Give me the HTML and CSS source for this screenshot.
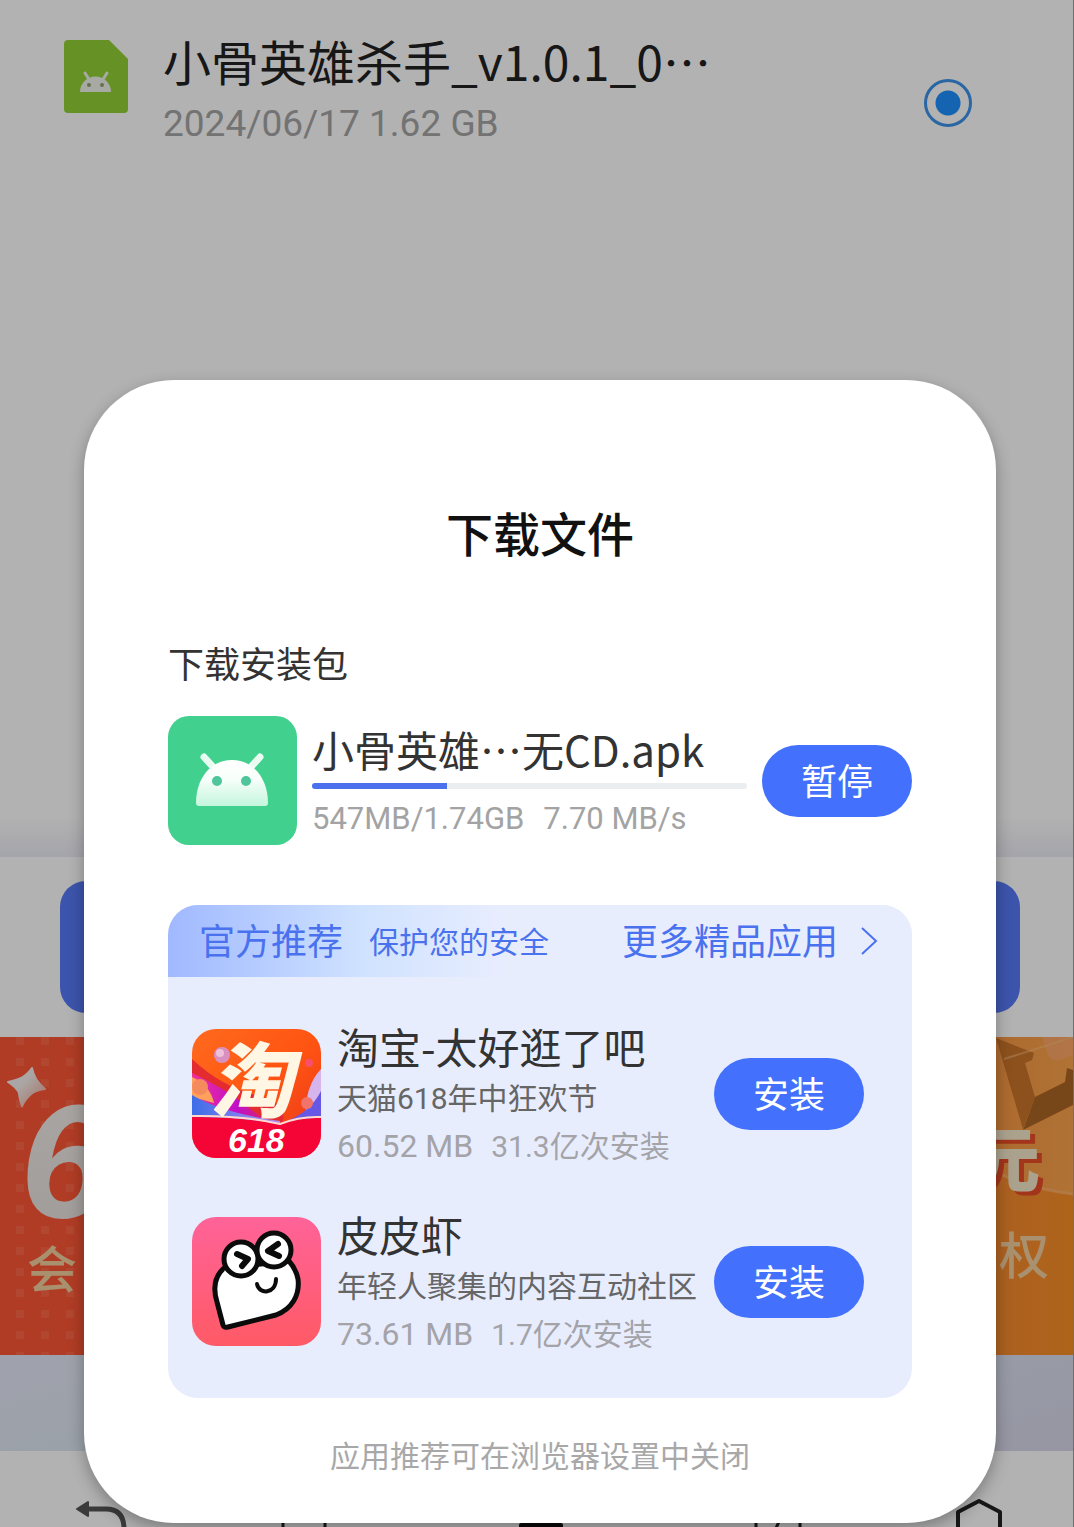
FILE: index.html
```html
<!DOCTYPE html>
<html lang="zh-CN">
<head>
<meta charset="utf-8">
<meta name="viewport" content="width=device-width, initial-scale=1">
<title>下载文件</title>
<link rel="stylesheet" href="styles.css">
</head>
<body>
<div class="page">
  <main class="files">
    <label class="file">
      <svg class="file-icon" viewBox="0 0 64 73" aria-hidden="true">
        <path d="M4 0H45L64 19V69a4 4 0 0 1-4 4H4a4 4 0 0 1-4-4V4a4 4 0 0 1 4-4z" fill="#93d235"/>
        <path d="M16 52a15 15 0 0 1 31 0z" fill="#f0f2ea"/>
        <path d="M21 33l5 8M43 33l-5 8" stroke="#f0f2ea" stroke-width="3" stroke-linecap="round"/>
        <circle cx="25" cy="45" r="2" fill="#93a070"/><circle cx="38" cy="45" r="2" fill="#93a070"/>
      </svg>
      <span class="file-text">
        <span class="file-name">小骨英雄杀手_v1.0.1_0…</span>
        <span class="file-meta">2024/06/17 1.62 GB</span>
      </span>
      <input class="file-radio" type="radio" name="file" checked>
    </label>
  </main>
  <div class="action-bar"><button class="action" type="button" aria-label="下载"></button></div>
  <div class="banner">
    <svg class="banner-art" width="200" height="318" viewBox="0 0 200 318">
      <defs>
        <pattern id="grid" x="16" y="0" width="25" height="21" patternUnits="userSpaceOnUse"><rect width="8" height="8" fill="#ff8468" opacity=".35"/></pattern>
        <linearGradient id="star" x1="0" y1="0" x2="1" y2="1"><stop offset=".4" stop-color="#f4eeec"/><stop offset="1" stop-color="#f2a08c"/></linearGradient>
        <linearGradient id="six" x1="0" y1="0" x2="0" y2="1"><stop offset="0" stop-color="#f2efec"/><stop offset="1" stop-color="#e6dfdc"/></linearGradient>
      </defs>
      <rect x="12" width="188" height="318" fill="url(#grid)"/>
      <path d="M32 31q2 12 13 21q-10 1-15 6q-6 6-8 11q-3-9-3-13q-3-6-11-11q9-2 13-4q7-4 11-10z" fill="url(#star)" stroke="url(#star)" stroke-width="2" stroke-linejoin="round"/>
      <text class="art-six" x="20" y="180" fill="url(#six)">6</text>
      <text class="art-word" x="27" y="251">会</text>
    </svg>
    <svg class="banner-art" width="174" height="318" viewBox="0 0 174 318">
      <defs><linearGradient id="shine" x1="0" y1="0" x2="1" y2="0"><stop offset="0" stop-color="#f08c38"/><stop offset="1" stop-color="#ffb66c"/></linearGradient></defs>
      <path d="M0 0H174V158Q130 152 90 132L0 90z" fill="url(#shine)" opacity=".55"/>
      <path d="M90 132Q130 152 174 157" fill="none" stroke="#ffb870" stroke-width="3" opacity=".6"/>
      <path d="M97 1l38 15l-2 7l-7 3l10 34l-12 32z" fill="#c9742a"/>
      <path d="M136 60l30-15l2-14l6 2v35l-50 25z" fill="#ad6624"/>
      <path d="M143 0l6 18q4 7 12 5l13-5V0z" fill="#ffab7c" opacity=".55"/>
      <path d="M105 22l38-12l31-10" stroke="#ffc080" stroke-width="2" opacity=".5"/>
      <text class="art-yuan" x="71" y="149">元</text>
      <text class="art-word" x="100" y="237">权</text>
    </svg>
  </div>
  <div class="strip"></div>
  <nav class="toolbar">
    <button class="tool" type="button" aria-label="返回"><svg viewBox="0 0 52 52"><path d="M10 10H30Q48 10 48 30" fill="none" stroke="#555" stroke-width="5"/><path d="M1 10L12 3V17z" fill="#555" stroke="#555" stroke-width="2" stroke-linejoin="round"/></svg></button>
    <span class="tool-group">
      <button class="tool" type="button" aria-label="目录"><svg viewBox="0 0 52 52"><path d="M5 12V50M47 12V50" stroke="#222" stroke-width="3"/></svg></button>
      <button class="tool" type="button" aria-label="菜单"><svg viewBox="0 0 52 52"><rect x="4" y="24" width="44" height="6" rx="2" fill="#111"/></svg></button>
      <button class="tool" type="button" aria-label="窗口"><svg viewBox="0 0 52 52"><path d="M4 16V50M48 16V50M30 16L20 38" stroke="#222" stroke-width="3"/></svg></button>
    </span>
    <button class="tool" type="button" aria-label="主页"><svg viewBox="0 0 52 52"><path d="M5 50V13L26 2L47 13V50" fill="none" stroke="#222" stroke-width="4" stroke-linejoin="round"/></svg></button>
  </nav>
</div>

<div class="overlay">
  <section class="dialog" role="dialog" aria-labelledby="dialog-title">
    <h1 class="dialog-title" id="dialog-title">下载文件</h1>
    <h2 class="label">下载安装包</h2>
    <div class="download">
      <svg class="icon" viewBox="0 0 129 129" aria-hidden="true">
        <defs><linearGradient id="droid" x1="0" y1="0" x2="0" y2="1"><stop offset="0" stop-color="#fff"/><stop offset=".4" stop-color="#f8fffb"/><stop offset="1" stop-color="#c4f6dd"/></linearGradient></defs>
        <rect width="129" height="129" rx="21" fill="#41d08d"/>
        <path d="M36 41l10 11M92 41l-10 11" stroke="#e8fcf2" stroke-width="7" stroke-linecap="round"/>
        <path d="M28 87C28 62 43 44 64 44s36 18 36 43q0 3-3 3H31q-3 0-3-3z" fill="url(#droid)"/>
        <circle cx="49" cy="65" r="5" fill="#4fc59b"/><circle cx="78" cy="65" r="5" fill="#4fc59b"/>
      </svg>
      <div class="download-text">
        <div class="name">小骨英雄…无CD.apk</div>
        <div class="track"><div class="fill" style="width:31%"></div></div>
        <div class="speed"><span>547MB/1.74GB</span><span>7.70 MB/s</span></div>
      </div>
      <button class="pill" type="button">暂停</button>
    </div>

    <section class="panel">
      <header class="panel-head">
        <h2 class="panel-title">官方推荐</h2>
        <span class="panel-note">保护您的安全</span>
        <a class="more" href="#apps">更多精品应用
          <svg class="chevron" viewBox="0 0 18 30" aria-hidden="true"><path d="M2 2L16 15L2 28" fill="none" stroke="#4a72ee" stroke-width="2"/></svg>
        </a>
      </header>
      <ul class="apps" id="apps">
        <li class="app">
          <svg class="icon" viewBox="0 0 129 129" aria-hidden="true">
            <defs>
              <clipPath id="round"><rect width="129" height="129" rx="24"/></clipPath>
              <linearGradient id="tb" x1="0" y1="0" x2="1" y2="1"><stop offset="0" stop-color="#ff6a1e"/><stop offset=".5" stop-color="#ff5512"/><stop offset="1" stop-color="#e8341c"/></linearGradient>
              <linearGradient id="violet" x1="0" y1="0" x2="1" y2="0"><stop offset="0" stop-color="#f0309a"/><stop offset=".5" stop-color="#c010c8"/><stop offset="1" stop-color="#e8302c"/></linearGradient>
              <linearGradient id="blue" x1="0" y1="0" x2="1" y2="0"><stop offset="0" stop-color="#3c6ee8"/><stop offset="1" stop-color="#b48cf0"/></linearGradient>
            </defs>
            <g clip-path="url(#round)">
              <rect width="129" height="129" fill="url(#tb)"/>
              <path d="M0 30Q30 58 64 66T90 96L0 90z" fill="#e42c30"/>
              <path d="M0 44Q34 60 56 78T92 96L0 92z" fill="url(#violet)"/>
              <path d="M0 48q18 8 22 26L0 68z" fill="#ffa05c"/>
              <path d="M0 66Q30 84 88 92V98H0z" fill="url(#blue)"/>
              <path d="M129 40Q112 58 114 90H129z" fill="#d6b4ec"/>
              <path d="M129 62Q118 84 92 93L129 90z" fill="#6658e4"/>
              <circle cx="30" cy="26" r="8" fill="#d890c0"/><circle cx="28" cy="24" r="4" fill="#efc0dc"/>
              <circle cx="8" cy="58" r="8" fill="#f58a5c"/><circle cx="115" cy="74" r="6" fill="#f0746c"/>
              <circle cx="117" cy="34" r="4" fill="#f8506c"/>
              <path d="M0 88Q50 88 88 95Q108 88 129 89V129H0z" fill="#f50536"/>
              <path d="M0 87Q50 86 88 95Q108 87 129 88" fill="none" stroke="#ffd8d0" stroke-width="2"/>
              <text class="tao" x="18" y="82">淘</text>
              <text class="tao-sale" x="36" y="123">618</text>
            </g>
          </svg>
          <div class="app-text">
            <h3 class="name">淘宝-太好逛了吧</h3>
            <p class="desc">天猫618年中狂欢节</p>
            <p class="meta"><span class="size">60.52 MB</span><span>31.3亿次安装</span></p>
          </div>
          <button class="pill" type="button">安装</button>
        </li>
        <li class="app">
          <svg class="icon" viewBox="0 0 129 129" aria-hidden="true">
            <defs><linearGradient id="pink" x1="0" y1="0" x2="0" y2="1"><stop offset="0" stop-color="#ff6398"/><stop offset="1" stop-color="#ff5a66"/></linearGradient></defs>
            <rect width="129" height="129" rx="24" fill="url(#pink)"/>
            <g fill="#fff" stroke="#0b0b0b" stroke-width="5" stroke-linejoin="round" stroke-linecap="round">
              <path d="M32 51C22 60 21 72 25 85L31 108Q32 111 36 110L84 98C100 92 108 78 106 62Q104 52 97 44z"/>
              <circle cx="49" cy="42" r="17"/><circle cx="82" cy="33" r="17"/>
              <path d="M45 37L56 42L50 49M86 27L76 34L87 39" fill="none" stroke-width="6"/>
              <path d="M65 67C67 78 84 77 84 62" fill="none" stroke-width="4"/>
            </g>
          </svg>
          <div class="app-text">
            <h3 class="name">皮皮虾</h3>
            <p class="desc">年轻人聚集的内容互动社区</p>
            <p class="meta"><span class="size">73.61 MB</span><span>1.7亿次安装</span></p>
          </div>
          <button class="pill" type="button">安装</button>
        </li>
      </ul>
    </section>
    <p class="hint">应用推荐可在浏览器设置中关闭</p>
  </section>
</div>
</body>
</html>
```
FILE: styles.css
```css
* { box-sizing: border-box; }
body, h1, h2, h3, p, ul { margin: 0; padding: 0; }
h1, h2, h3 { font-weight: 400; }
body {
  position: relative;
  font-family: Roboto, "Noto Sans CJK SC", sans-serif;
  color: #222;
  background: #fff;
}
button, input { margin: 0; padding: 0; border: 0; font: inherit; }
svg { display: block; flex: none; }

/* Page under the dialog */
.page {
  display: flex;
  flex-direction: column;
  min-height: 100vh;
  border-right: 1px solid #a0a0a0;
}
.files {
  flex: 1;
  padding: 28px 101px 0 64px;
  background: linear-gradient(to top, #ebebf5, #fff 40px);
}
.file { display: flex; align-items: flex-start; }
.file-icon { width: 64px; height: 73px; margin: 12px 35px 0 0; }
.file-text { display: flex; flex: 1; flex-direction: column; gap: 10px; min-width: 0; }
.file-name { font-family: "Noto Sans CJK SC", sans-serif; font-size: 48px; line-height: 64px; white-space: nowrap; }
.file-meta { font-size: 37px; line-height: 44px; color: #a5a5a5; }
.file-radio {
  appearance: none;
  width: 48px;
  height: 48px;
  margin-top: 51px;
  border: 3px solid #3b93ea;
  border-radius: 50%;
  background: radial-gradient(circle, #1d90ff 12px, transparent 13px);
}
.action-bar { padding: 24px 53px 24px 60px; }
.action { display: block; width: 100%; height: 132px; border-radius: 26px; background: #5679f6; }
.banner {
  display: flex;
  justify-content: space-between;
  height: 318px;
  overflow: hidden;
  background: linear-gradient(to right, #fe5635 20%, #f58832 90%, #fb9028);
}
.art-six { font: italic 700 162px "Liberation Sans", sans-serif; }
.art-word { font: 500 50px "Noto Sans CJK SC", sans-serif; fill: #f2cf9e; }
.art-yuan {
  font: 900 70px "Noto Sans CJK SC", sans-serif;
  fill: #f5e8cc;
  filter: drop-shadow(5px 4px 0 #e84c26);
}
.strip { height: 96px; background: linear-gradient(165deg, #e4e8f6, #dbe6f1 50%, #d8d6ea); }
.toolbar {
  display: flex;
  justify-content: space-between;
  height: 76px;
  padding: 48px 68px 0 76px;
  overflow: hidden;
}
.tool-group { display: flex; justify-content: space-between; flex-basis: 526px; }
.tool { width: 52px; height: 52px; background: none; }

/* Dialog */
.overlay {
  position: absolute;
  inset: 0;
  display: flex;
  align-items: flex-end;
  padding: 0 78px 4px 84px;
  background: rgba(0, 0, 0, .3);
}
.dialog {
  flex: 1;
  min-width: 0;
  padding: 124px 84px 46px;
  border-radius: 90px;
  background: #fff;
  box-shadow: 0 6px 16px rgba(0, 0, 0, .3);
}
.dialog-title { font-size: 47px; line-height: 64px; font-weight: 500; text-align: center; color: #111; }
.label { margin-top: 74px; font-size: 36px; line-height: 48px; color: #333; }
.download { display: flex; align-items: center; gap: 15px; margin-top: 26px; }
.icon { width: 129px; height: 129px; }
.download-text { flex: 1; min-width: 0; }
.name { font-family: "Noto Sans CJK SC", sans-serif; font-size: 42px; line-height: 56px; color: #333; white-space: nowrap; }
.track { height: 6px; margin: 6px 0 8px; border-radius: 3px; background: #ebeef0; overflow: hidden; }
.fill { height: 100%; background: #4a70ee; }
.speed { display: flex; gap: 19px; font-size: 31px; line-height: 44px; color: #a3a3a3; white-space: nowrap; }
.pill {
  flex: none;
  width: 150px;
  height: 72px;
  padding-top: 4px;
  border-radius: 36px;
  background: #4370fc;
  color: #fff;
  font-size: 36px;
  line-height: 68px;
}
.panel { margin-top: 60px; border-radius: 30px; background: #e8edfe; overflow: hidden; }
.panel-head {
  display: flex;
  align-items: center;
  height: 72px;
  padding: 4px 34px 0 31px;
  color: #4a72ee;
  background: linear-gradient(to right, #a0b9ff, #cfe2ff 26%, #e8edfe 45%);
}
.panel-title { font-size: 36px; line-height: 48px; }
.panel-note { margin-left: 26px; font-size: 30px; line-height: 48px; }
.more {
  display: flex;
  align-items: center;
  gap: 22px;
  margin-left: auto;
  font-size: 36px;
  line-height: 48px;
  color: inherit;
  text-decoration: none;
}
.chevron { width: 18px; height: 30px; margin-bottom: 4px; }
.apps { display: grid; gap: 37px; padding: 41px 48px 41px 24px; list-style: none; }
.app { display: flex; align-items: center; gap: 16px; }
.app-text { flex: 1; min-width: 0; }
.desc { font-size: 30px; line-height: 50px; color: #666; white-space: nowrap; }
.meta { display: flex; gap: 18px; font-size: 30px; line-height: 45px; color: #a3a3a8; white-space: nowrap; }
.size { font-size: 32px; }
.tao { font: italic 900 82px "Noto Sans CJK SC", sans-serif; fill: #fff6e4; }
.tao-sale { font: italic 700 34px "Liberation Sans", sans-serif; fill: #fff; }
.hint { margin-top: 39px; font-size: 30px; line-height: 40px; text-align: center; color: #a8a8a8; }
```
